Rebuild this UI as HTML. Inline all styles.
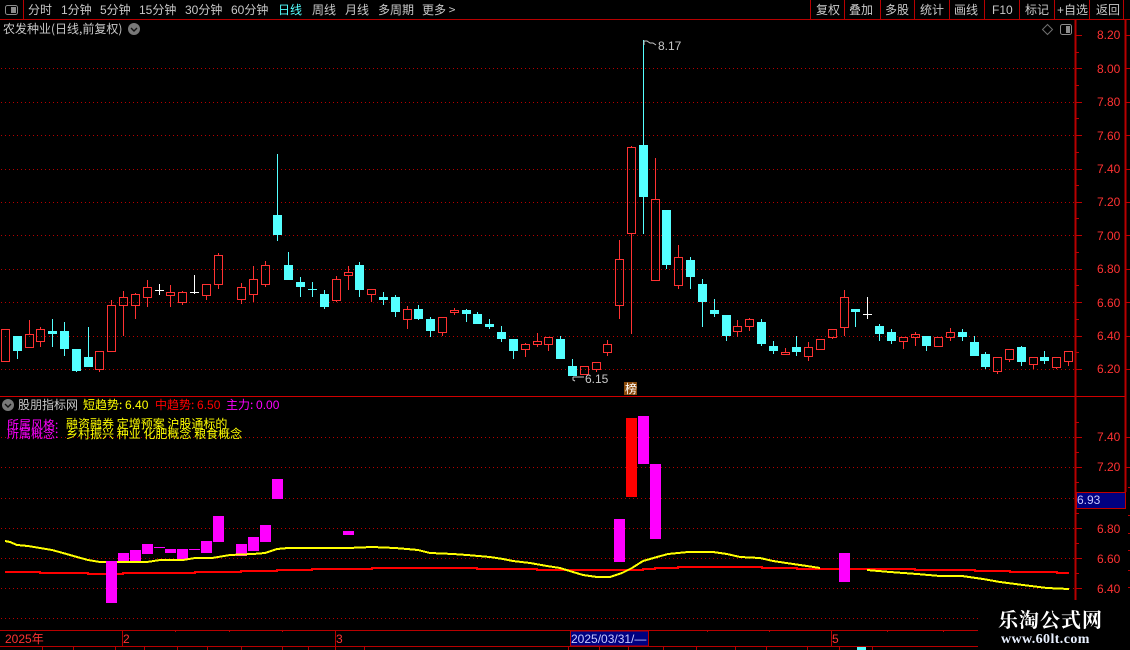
<!DOCTYPE html>
<html lang="zh">
<head>
<meta charset="utf-8">
<title>K</title>
<style>
html,body{margin:0;padding:0;background:#000;}
#p{position:relative;width:1130px;height:650px;overflow:hidden;background:#000;font:12px/14px "WenQuanYi Zen Hei","Noto Sans CJK SC","Liberation Sans",sans-serif;color:#c8c8c8;}
#p svg{position:absolute;left:0;top:0;}
.t{position:absolute;white-space:nowrap;line-height:14px;}
.n{font-family:"Liberation Sans","WenQuanYi Zen Hei",sans-serif;}
.r{color:#ff3232;font-family:"Liberation Sans",sans-serif;}
</style>
</head>
<body>
<div id="p">
<svg width="1130" height="650" viewBox="0 0 1130 650" fill="none">
<!-- dotted grid -->
<g stroke="#b80000" stroke-width="1" stroke-dasharray="1 3" shape-rendering="crispEdges">
<path d="M1 68.5H1075M1 102.5H1075M1 135.5H1075M1 169.5H1075M1 202.5H1075M1 235.5H1075M1 269.5H1075M1 302.5H1075M1 336.5H1075M1 369.5H1075"/>
<path d="M1 437.5H1075M1 467.5H1075M1 498.5H1075M1 528.5H1075M1 558.5H1075M1 588.5H1075M1 618.5H978"/>
</g>
<!-- frame lines -->
<g stroke="#b80000" stroke-width="1" shape-rendering="crispEdges">
<path d="M0 19.5H1130M23.5 0V19M810.5 0V19M844.5 0V19M880.5 0V19M914.5 0V19M949.5 0V19M984.5 0V19M1019.5 0V19M1054.5 0V19M1089.5 0V19M1123.5 0V19"/>
<path d="M0 630.5H978M0 646.5H978"/>
<path d="M122.5 631V646M335.5 631V646M570.5 631V646M648.5 631V646M831.5 631V646"/>
<path d="M175.5 631V632M229.5 631V632M282.5 631V632M707.5 631V632M769.5 631V632M887.5 631V632M943.5 631V632"/>
<path d="M42.5 647V650M73.5 647V650M115.5 647V650M144.5 647V650M177.5 647V650M207.5 647V650M241.5 647V650M282.5 647V650M308.5 647V650M335.5 647V650M364.5 647V650M568.5 647V650M599.5 647V650M628.5 647V650M663.5 647V650M696.5 647V650M735.5 647V650M766.5 647V650M807.5 647V650M839.5 647V650M872.5 647V650"/>
</g>
<path d="M0 396.5H1126" stroke="#d00000" stroke-width="1.4" shape-rendering="crispEdges"/>
<path d="M1075.5 20V600" stroke="#b80000" stroke-width="2" shape-rendering="crispEdges"/>
<path d="M1125.5 20V492" stroke="#b80000" stroke-width="2" shape-rendering="crispEdges"/>
<g stroke="#c00000" stroke-width="1" shape-rendering="crispEdges">
<path d="M1076 35.5h6M1076 68.5h6M1076 102.5h6M1076 135.5h6M1076 169.5h6M1076 202.5h6M1076 235.5h6M1076 269.5h6M1076 302.5h6M1076 336.5h6M1076 369.5h6M1076 52.5h3M1076 85.5h3M1076 118.5h3M1076 152.5h3M1076 185.5h3M1076 218.5h3M1076 252.5h3M1076 285.5h3M1076 319.5h3M1076 352.5h3"/>
<path d="M1076 437.5h6M1076 467.5h6M1076 528.5h6M1076 558.5h6M1076 588.5h6M1076 422.5h3M1076 452.5h3M1076 482.5h3M1076 513.5h3M1076 543.5h3M1076 573.5h3"/>
<path d="M1126 35.5h4M1126 68.5h4M1126 102.5h4M1126 135.5h4M1126 169.5h4M1126 202.5h4M1126 235.5h4M1126 269.5h4M1126 302.5h4M1126 336.5h4M1126 369.5h4M1126 437.5h4M1126 467.5h4M1128 487.5h2M1128 515.5h2M1128 533.5h2M1128 550.5h2M1128 570.5h2M1128 587.5h2"/>
</g>
<!-- red candle wicks + bodies -->
<path stroke="#ff3232" stroke-width="1" shape-rendering="crispEdges" d="
M1.5 329.5h8v32h-8z
M25.5 334.5h8v13h-8zM29.5 320V334
M36.5 329.5h8v12h-8zM40.5 327V329M40.5 342V347
M95.5 351.5h8v18h-8zM99.5 370V372
M107.5 305.5h8v46h-8zM111.5 300V305
M119.5 297.5h8v8h-8zM123.5 291V297M123.5 306V336
M131.5 294.5h8v11h-8zM135.5 293V294M135.5 306V319
M143.5 287.5h8v10h-8zM147.5 280V287M147.5 298V307
M166.5 292.5h8v3h-8zM170.5 285V292M170.5 296V307
M178.5 292.5h8v10h-8zM182.5 291V292M182.5 303V305
M202.5 284.5h8v11h-8zM206.5 296V300
M214.5 255.5h8v29h-8zM218.5 253V255M218.5 285V289
M237.5 287.5h8v12h-8zM241.5 283V287M241.5 300V304
M249.5 279.5h8v15h-8zM253.5 266V279M253.5 295V302
M261.5 265.5h8v19h-8zM265.5 261V265M265.5 285V287
M332.5 279.5h8v21h-8zM336.5 276V279M336.5 301V302
M344.5 272.5h8v3h-8zM348.5 266V272M348.5 276V290
M367.5 289.5h8v5h-8zM371.5 295V302
M403.5 309.5h8v10h-8zM407.5 306V309M407.5 320V329
M438.5 317.5h8v15h-8zM442.5 333V336
M450.5 310.5h8v2h-8zM454.5 308V310M454.5 313V315
M521.5 344.5h8v5h-8zM525.5 343V344M525.5 350V357
M533.5 341.5h8v3h-8zM537.5 333V341M537.5 345V347
M544.5 337.5h8v7h-8zM548.5 345V351
M580.5 366.5h8v8h-8z
M592.5 362.5h8v7h-8zM596.5 370V372
M603.5 344.5h8v8h-8zM607.5 340V344M607.5 353V356
M615.5 259.5h8v46h-8zM619.5 240V259M619.5 306V319
M627.5 147.5h8v86h-8zM631.5 146V147M631.5 234V334
M651.5 199.5h8v81h-8zM655.5 158V199
M674.5 257.5h8v28h-8zM678.5 245V257M678.5 286V289
M733.5 326.5h8v5h-8zM737.5 320V326M737.5 332V337
M745.5 319.5h8v7h-8zM749.5 318V319M749.5 327V331
M781.5 352.5h8v2h-8zM785.5 348V352
M804.5 347.5h8v9h-8zM808.5 342V347M808.5 357V361
M816.5 339.5h8v10h-8z
M828.5 329.5h8v8h-8zM832.5 338V339
M840.5 297.5h8v30h-8zM844.5 290V297M844.5 328V336
M899.5 337.5h8v4h-8zM903.5 342V349
M911.5 334.5h8v3h-8zM915.5 332V334M915.5 338V346
M934.5 337.5h8v9h-8z
M946.5 332.5h8v5h-8zM950.5 328V332M950.5 338V341
M993.5 357.5h8v14h-8zM997.5 372V374
M1005.5 349.5h8v10h-8zM1009.5 360V362
M1029.5 357.5h8v7h-8zM1033.5 365V369
M1052.5 357.5h8v10h-8zM1056.5 368V369
M1064.5 351.5h8v10h-8zM1068.5 362V366"/>
<!-- cyan wicks -->
<path stroke="#54ffff" stroke-width="1" shape-rendering="crispEdges" d="
M17.5 336V359M52.5 319V347M64.5 322V356M76.5 349V372M88.5 327V357M277.5 154V241M288.5 252V265M300.5 277V297M324.5 290V309M359.5 262V297M383.5 292V305M395.5 295V317M418.5 305V320M430.5 317V337M466.5 309V322M477.5 312V314M489.5 319V329M501.5 326V342M513.5 339V359M560.5 336V339M572.5 359V366M643.5 40V234M666.5 265V269M690.5 257V289M702.5 279V327M714.5 299V317M726.5 336V341M761.5 319V346M773.5 341V354M796.5 336V356M855.5 312V327M879.5 324V341M891.5 329V344M926.5 346V351M962.5 329V341M974.5 336V342M985.5 352V369M1021.5 346V366M1044.5 351V364
M312.5 282V297M308 289.5h9"/>
<!-- cyan bodies -->
<path fill="#54ffff" shape-rendering="crispEdges" d="
M13 336h9v15h-9zM48 331h9v3h-9zM60 331h9v18h-9zM72 349h9v22h-9zM84 357h9v10h-9zM273 215h9v20h-9zM284 265h9v15h-9zM296 282h9v5h-9zM320 294h9v13h-9zM355 265h9v25h-9zM379 297h9v3h-9zM391 297h9v15h-9zM414 309h9v10h-9zM426 319h9v12h-9zM462 310h9v4h-9zM473 314h9v10h-9zM485 324h9v3h-9zM497 332h9v7h-9zM509 339h9v12h-9zM556 339h9v20h-9zM568 366h9v10h-9zM639 145h9v52h-9zM662 210h9v55h-9zM686 260h9v17h-9zM698 284h9v18h-9zM710 310h9v4h-9zM722 315h9v21h-9zM757 322h9v22h-9zM769 346h9v5h-9zM792 347h9v5h-9zM851 309h9v3h-9zM875 326h9v8h-9zM887 332h9v9h-9zM922 336h9v10h-9zM958 332h9v5h-9zM970 342h9v14h-9zM981 354h9v13h-9zM1017 347h9v15h-9zM1040 357h9v4h-9z"/>
<!-- white crosses -->
<path stroke="#fff" stroke-width="1" shape-rendering="crispEdges" d="M159.5 284V295M155 290.5h9M194.5 275V294M190 292.5h9M867.5 297V319M863 314.5h9"/>
<!-- lower bars -->
<path fill="#ff00ff" shape-rendering="crispEdges" d="M118 553h11v9h-11zM130 550h11v12h-11zM142 544h11v10h-11zM154 547h11v1h-11zM165 549h11v4h-11zM177 549h11v10h-11zM189 549h11v1h-11zM201 541h11v12h-11zM213 516h11v26h-11zM236 544h11v12h-11zM248 537h11v14h-11zM260 525h11v17h-11zM272 479h11v20h-11zM343 531h11v4h-11zM614 519h11v43h-11zM638 416h11v48h-11zM650 464h11v75h-11z"/>
<path fill="#ff0000" shape-rendering="crispEdges" d="M626 418h11v79h-11z"/>
<!-- lines -->
<polyline stroke="#ff0000" stroke-width="2" shape-rendering="crispEdges" points="5,572 40,572 40,573 88,573 88,574 123,574 123,573 195,573 195,572 241,572 241,571 277,571 277,570 312,570 312,569 372,569 372,568 477,568 477,569 537,569 537,570 643,570 643,569 655,569 655,568 678,568 678,567 762,567 762,568 797,568 797,569 915,569 915,570 975,570 975,571 1010,571 1010,572 1057,572 1057,573 1069,573"/>
<polyline stroke="#ffff00" stroke-width="2" shape-rendering="crispEdges" points="5,541 10,542 17,545 28,546 40,548 52,550 63,553 77,557 88,560 100,562 117,562 147,562 160,560 183,560 195,558 212,558 230,555 253,554 265,553 277,549 288,548 348,548 372,547 395,548 407,549 418,550 430,553 453,554 467,555 490,557 503,559 513,561 530,563 547,566 560,568 573,572 583,575 597,577 610,577 622,573 632,568 643,561 657,557 668,554 678,553 688,552 713,552 727,554 740,557 760,558 773,561 793,564 807,566 820,568"/>
<polyline stroke="#ffff00" stroke-width="2" shape-rendering="crispEdges" points="867,570 890,572 917,574 940,576 962,576 983,579 1000,582 1023,585 1047,588 1069,589"/>
<path fill="#ff00ff" shape-rendering="crispEdges" d="M106 561h11v42h-11zM839 553h11v29h-11z"/>
<!-- small icons -->
<rect x="5.5" y="5.5" width="12" height="9" rx="2" stroke="#8c8c8c"/>
<rect x="11" y="7" width="5" height="6" fill="#8c8c8c"/>
<circle cx="134" cy="29" r="6" fill="#787878"/>
<path d="M131 28l3 3 3-3" stroke="#111" stroke-width="1.4"/>
<circle cx="8" cy="405" r="6" fill="#787878"/>
<path d="M5 404l3 3 3-3" stroke="#111" stroke-width="1.4"/>
<path d="M1047.5 24.5l5 5-5 5-5-5z" stroke="#707070"/>
<rect x="1060.5" y="24.5" width="11" height="10" rx="2" stroke="#8c8c8c"/>
<rect x="1066" y="26" width="4" height="7" fill="#8c8c8c"/>
<!-- annotation arrows -->
<path stroke="#c8c8c8" d="M644 45V41h3l3 2h3l3 2" fill="none"/>
<path stroke="#c8c8c8" d="M573 377h11M573 377v3l2 1" fill="none"/>
<!-- badge -->
<rect x="624" y="382" width="13" height="13" fill="#8a4a0a"/>
<!-- 6.93 box -->
<rect x="1076.5" y="492.5" width="49" height="16" fill="#000080" stroke="#c00000"/>
<!-- date box -->
<rect x="570.5" y="631" width="78" height="15" fill="#000080" stroke="#b80000"/>
<!-- watermark bg -->
<rect x="978" y="600" width="152" height="50" fill="#000"/>
<path d="M857 647h9v3h-9z" fill="#54ffff"/>
</svg>

<!-- toolbar -->
<div class="t" style="left:28px;top:3px">分时</div>
<div class="t n" style="left:61px;top:3px">1分钟</div>
<div class="t n" style="left:100px;top:3px">5分钟</div>
<div class="t n" style="left:139px;top:3px">15分钟</div>
<div class="t n" style="left:185px;top:3px">30分钟</div>
<div class="t n" style="left:231px;top:3px">60分钟</div>
<div class="t" style="left:278px;top:3px;color:#54ffff">日线</div>
<div class="t" style="left:312px;top:3px">周线</div>
<div class="t" style="left:345px;top:3px">月线</div>
<div class="t" style="left:378px;top:3px">多周期</div>
<div class="t" style="left:422px;top:3px">更多 &gt;</div>
<div class="t" style="left:816px;top:3px">复权</div>
<div class="t" style="left:849px;top:3px">叠加</div>
<div class="t" style="left:885px;top:3px">多股</div>
<div class="t" style="left:920px;top:3px">统计</div>
<div class="t" style="left:954px;top:3px">画线</div>
<div class="t n" style="left:992px;top:3px">F10</div>
<div class="t" style="left:1025px;top:3px">标记</div>
<div class="t n" style="left:1057px;top:3px">+自选</div>
<div class="t" style="left:1096px;top:3px">返回</div>
<div class="t" style="left:3px;top:22px">农发种业(日线,前复权)</div>

<!-- main axis -->
<div class="t r" style="left:1097px;top:28px">8.20</div>
<div class="t r" style="left:1097px;top:62px">8.00</div>
<div class="t r" style="left:1097px;top:95px">7.80</div>
<div class="t r" style="left:1097px;top:129px">7.60</div>
<div class="t r" style="left:1097px;top:162px">7.40</div>
<div class="t r" style="left:1097px;top:195px">7.20</div>
<div class="t r" style="left:1097px;top:229px">7.00</div>
<div class="t r" style="left:1097px;top:262px">6.80</div>
<div class="t r" style="left:1097px;top:296px">6.60</div>
<div class="t r" style="left:1097px;top:329px">6.40</div>
<div class="t r" style="left:1097px;top:362px">6.20</div>

<div class="t n" style="left:658px;top:39px;color:#c8c8c8">8.17</div>
<div class="t n" style="left:585px;top:372px;color:#c8c8c8">6.15</div>
<div class="t" style="left:625px;top:382px;color:#fff">榜</div>

<!-- lower header -->
<div class="t" style="left:18px;top:398px">股朋指标网</div>
<div class="t" style="left:83px;top:398px;color:#ffff00">短趋势: <span class="n">6.40</span></div>
<div class="t" style="left:155px;top:398px;color:#ff0000">中趋势: <span class="n">6.50</span></div>
<div class="t" style="left:226px;top:398px;color:#ff00ff">主力: <span class="n">0.00</span></div>
<div class="t" style="left:7px;top:418px;color:#ff00ff">所属风格:</div>
<div class="t" style="left:66px;top:417px;color:#ffff00">融资融券 定增预案 沪股通标的</div>
<div class="t" style="left:7px;top:427px;color:#ff00ff">所属概念:</div>
<div class="t" style="left:66px;top:427px;color:#ffff00">乡村振兴 种业 化肥概念 粮食概念</div>

<!-- lower axis -->
<div class="t r" style="left:1097px;top:430px">7.40</div>
<div class="t r" style="left:1097px;top:460px">7.20</div>
<div class="t n" style="left:1077px;top:493px;color:#c8c8ff">6.93</div>
<div class="t r" style="left:1097px;top:522px">6.80</div>
<div class="t r" style="left:1097px;top:552px">6.60</div>
<div class="t r" style="left:1097px;top:582px">6.40</div>

<!-- time axis -->
<div class="t r" style="left:5px;top:632px">2025<span style="font-family:'WenQuanYi Zen Hei',sans-serif">年</span></div>
<div class="t r" style="left:123px;top:632px">2</div>
<div class="t r" style="left:336px;top:632px">3</div>
<div class="t r" style="left:832px;top:632px">5</div>
<div class="t n" style="left:571px;top:632px;color:#c8c8ff">2025/03/31/—</div>

<!-- watermark -->
<div class="t" style="left:998px;top:608px;color:#fff;font:bold 20px/22px 'Noto Serif CJK SC','Liberation Serif',serif;letter-spacing:1px">乐淘公式网</div>
<div class="t" style="left:1001px;top:632px;color:#e8f0ff;font:bold 14px/15px 'Liberation Serif',serif;letter-spacing:.4px">www.60lt.com</div>
</div>
</body>
</html>
